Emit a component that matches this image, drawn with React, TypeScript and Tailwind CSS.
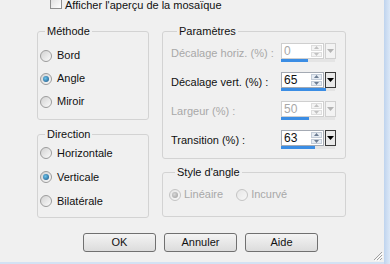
import React from "react";

function Radio({ checked = false, disabled = false }: { checked?: boolean; disabled?: boolean }) {
  return (
    <span
      className={`flex w-[12px] h-[12px] shrink-0 items-center justify-center rounded-full border ${
        disabled ? "border-[#c4c4c4] bg-gradient-to-br from-[#e6e6e6] to-[#f8f8f8]" : "border-[#9c9c9c] bg-gradient-to-br from-[#d2d2d2] to-[#fbfbfb]"
      }`}
    >
      {checked && (
        <span
          className={`w-[6px] h-[6px] rounded-full ${
            disabled
              ? "bg-[radial-gradient(circle_at_40%_40%,#d8d8d8,#9a9a9a)]"
              : "bg-[radial-gradient(circle_at_40%_40%,#6cc4ec,#174f80)]"
          }`}
        />
      )}
    </span>
  );
}

function RadioRow({ label, checked, h }: { label: string; checked?: boolean; h: string }) {
  return (
    <div className={`flex items-center ${h}`}>
      <Radio checked={checked} />
      <span className="ml-[5px] text-[#111]">{label}</span>
    </div>
  );
}

function Tri({ dir, color }: { dir: "up" | "down"; color: string }) {
  return (
    <svg width="5" height="3" viewBox="0 0 5 3">
      {dir === "up" ? <polygon points="0,3 5,3 2.5,0" fill={color} /> : <polygon points="0,0 5,0 2.5,3" fill={color} />}
    </svg>
  );
}

function Spin({ value, fill, disabled }: { value: string; fill: number; disabled?: boolean }) {
  const arrow = disabled ? "#c2c2c2" : "#6c7c92";
  return (
    <div className="flex flex-col w-[55px]">
      <div className="flex h-[16px]">
        <div
          className={`flex w-[43px] border bg-white ${disabled ? "border-[#cfcfcf]" : "border-[#a4aab3]"}`}
        >
          <span
            className={`flex-1 pl-[2px] text-[12px] leading-[14px] ${disabled ? "text-[#a8a8a8]" : "text-[#111]"}`}
          >
            {value}
          </span>
          <div className="flex flex-col w-[11px] my-[1px] mr-[1px] gap-[1px]">
            <div
              className={`flex flex-1 items-center justify-center border ${
                disabled ? "border-[#dedede] bg-[#f4f4f4]" : "border-[#c3ccd8] bg-[#e6ecf3]"
              }`}
            >
              <Tri dir="up" color={arrow} />
            </div>
            <div
              className={`flex flex-1 items-center justify-center border ${
                disabled ? "border-[#dedede] bg-[#f4f4f4]" : "border-[#c3ccd8] bg-[#e6ecf3]"
              }`}
            >
              <Tri dir="down" color={arrow} />
            </div>
          </div>
        </div>
        <div
          className={`ml-[1px] flex w-[11px] items-center justify-center border ${
            disabled ? "border-[#d0d0d0] bg-[#f3f3f3]" : "border-[#3a3a3a] bg-[#e9e9e9]"
          }`}
        >
          <svg width="7" height="4" viewBox="0 0 7 4">
            <polygon points="0,0 7,0 3.5,4" fill={disabled ? "#b4b4b4" : "#000"} />
          </svg>
        </div>
      </div>
      <div className="flex h-[3px] w-[54px] bg-[#e4e4e4]">
        <div className="h-full bg-[#3b8de4]" style={{ width: fill }} />
      </div>
    </div>
  );
}

function ParamRow({ label, value, fill, disabled }: { label: string; value: string; fill: number; disabled?: boolean }) {
  return (
    <div className="flex h-[29px] items-start">
      <span className={`w-[110px] pt-[2px] leading-[16px] ${disabled ? "text-[#a8a8a8]" : "text-[#111]"}`}>{label}</span>
      <Spin value={value} fill={fill} disabled={disabled} />
    </div>
  );
}

function Button({ label }: { label: string }) {
  return (
    <button className="flex h-[19px] w-[73px] items-center justify-center rounded-[3px] border border-[#707070] bg-gradient-to-b from-[#f4f4f4] to-[#dcdcdc] text-[11px] text-[#111]">
      {label}
    </button>
  );
}

export default function App() {
  return (
    <div className="flex h-[264px] w-[390px] overflow-hidden bg-[#f0f0f0] font-['Liberation_Sans',Arial,sans-serif] text-[11px] leading-[13px]">
      <div className="relative flex h-full w-[384px] flex-col">
        <div className="flex flex-1 flex-col">
          {/* checkbox row */}
          <div className="mt-[-4px] flex h-[13px] items-start pl-[50px]">
            <span className="h-[13px] w-[12px] border border-[#8e8f8f] bg-gradient-to-br from-[#dcdcdc] to-white" />
            <span className="ml-[3px] mt-[3px] text-[#111]">Afficher l'aperçu de la mosaïque</span>
          </div>

          <div className="mt-[16px] flex pl-[37px]">
            {/* left column */}
            <div className="flex w-[112px] flex-col">
              <fieldset className="h-[95px] rounded-[3px] border border-[#d3d3d3] pl-[2px] pt-[6px]">
                <legend className="ml-[5px] px-[2px] text-[#111]">Méthode</legend>
                <RadioRow label="Bord" h="h-[23px]" />
                <RadioRow label="Angle" checked h="h-[23px]" />
                <RadioRow label="Miroir" h="h-[23px]" />
              </fieldset>
              <fieldset className="mt-[8px] h-[90px] rounded-[3px] border border-[#d3d3d3] pl-[2px]">
                <legend className="ml-[5px] px-[2px] text-[#111]">Direction</legend>
                <RadioRow label="Horizontale" h="h-[24px]" />
                <RadioRow label="Verticale" checked h="h-[24px]" />
                <RadioRow label="Bilatérale" h="h-[24px]" />
              </fieldset>
            </div>

            {/* right column */}
            <div className="ml-[13px] flex w-[184px] flex-col">
              <fieldset className="h-[134px] rounded-[3px] border border-[#d3d3d3] pl-[8px] pt-[5px]">
                <legend className="ml-[6px] px-[2px] text-[#111]">Paramètres</legend>
                <ParamRow label="Décalage horiz. (%) :" value="0" fill={27} disabled />
                <ParamRow label="Décalage vert. (%) :" value="65" fill={45} />
                <ParamRow label="Largeur (%) :" value="50" fill={28} disabled />
                <ParamRow label="Transition (%) :" value="63" fill={34} />
              </fieldset>
              <fieldset className="mt-[7px] h-[51px] rounded-[3px] border border-[#d3d3d3] pl-[6px] pt-[4px]">
                <legend className="ml-[6px] px-[2px] text-[#111]">Style d'angle</legend>
                <div className="flex h-[23px] items-center">
                  <Radio checked disabled />
                  <span className="ml-[3px] text-[#a8a8a8]">Linéaire</span>
                  <span className="ml-[13px]">
                    <Radio disabled />
                  </span>
                  <span className="ml-[3px] text-[#a8a8a8]">Incurvé</span>
                </div>
              </fieldset>
            </div>
          </div>

          {/* buttons */}
          <div className="mt-[15px] flex gap-[8px] pl-[83px]">
            <Button label="OK" />
            <Button label="Annuler" />
            <Button label="Aide" />
          </div>
        </div>
        <div className="h-[2px] bg-[#d3e2f4]" />
        <svg className="absolute bottom-[3px] right-[1px]" width="11" height="11" viewBox="0 0 11 11">
          <line x1="10" y1="2" x2="2" y2="10" stroke="#a0a0a0" strokeWidth="1" />
          <line x1="10" y1="5" x2="5" y2="10" stroke="#a0a0a0" strokeWidth="1" />
          <line x1="10" y1="8" x2="8" y2="10" stroke="#a0a0a0" strokeWidth="1" />
          <line x1="11" y1="3" x2="3" y2="11" stroke="#ffffff" strokeWidth="1" />
          <line x1="11" y1="6" x2="6" y2="11" stroke="#ffffff" strokeWidth="1" />
        </svg>
      </div>
      <div className="h-full w-[6px] bg-gradient-to-r from-[#bfd4ee] to-[#dce8f7]" />
    </div>
  );
}
